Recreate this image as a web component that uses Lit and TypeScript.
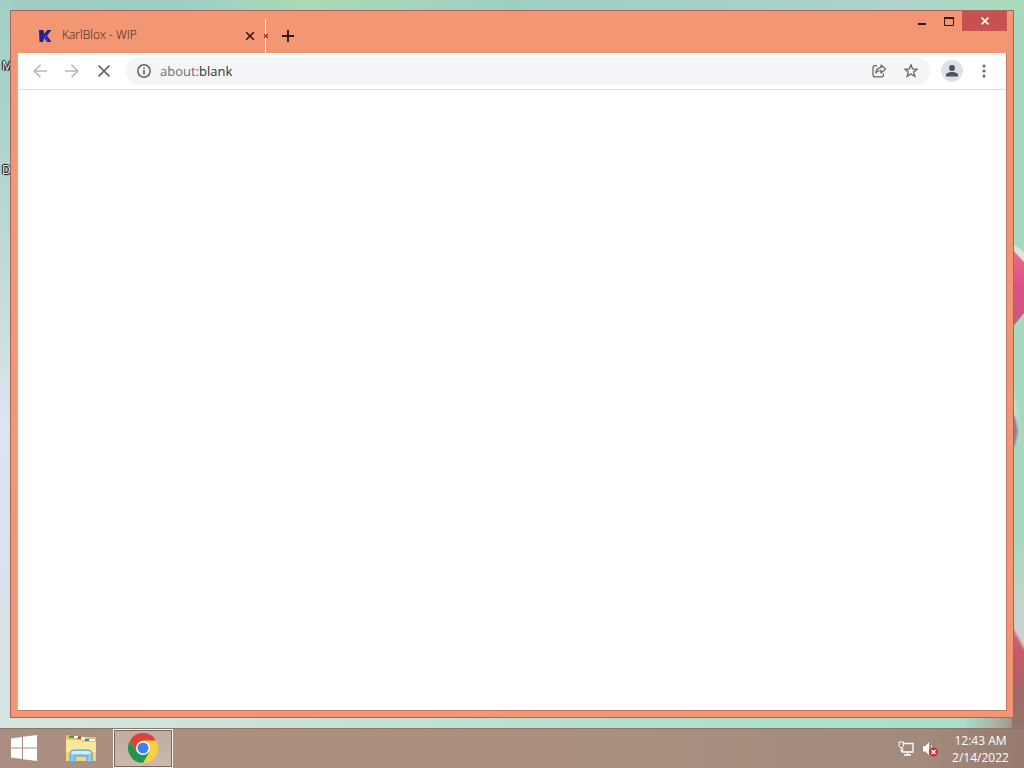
import { LitElement, html, css } from "lit";
import { customElement, state } from "lit/decorators.js";

@customElement("desktop-wallpaper")
class DesktopWallpaper extends LitElement {
  static styles = css`
    :host {
      display: block;
      position: absolute;
      inset: 0;
      overflow: hidden;
      background:
        linear-gradient(to bottom, #a0cfc4 0, #a9d2c8 12%, #c2dad6 35%, #dce4ee 55%, #d8e2e8 85%, #d3e6dc 100%) left / 12px 100% no-repeat,
        linear-gradient(to right, #9fcbc5 0, #9bcfc6 18%, #add9b6 30%, #9dcfc1 50%, #a9cfcb 75%, #b0d3cd 88%, #a9dbb9 100%) top / 100% 12px no-repeat,
        linear-gradient(to right, #d3e6dc 0, #c9e3da 30%, #b4dfcf 60%, #a9dfcb 94%, #a9a79b 98%, #93786e 100%) bottom / 100% 60px no-repeat,
        #a9d9bc;
    }
    .art {
      position: absolute;
      top: 0;
      right: 0;
      width: 12px;
      height: 100%;
    }
    .label {
      position: absolute;
      left: 2px;
      font: 12px/16px "Open Sans", "Noto Sans", sans-serif;
      color: #fff;
      text-shadow: 0 0 1px #000, 1px 1px 1px #000, -1px 0 1px #000, 0 -1px 1px #000;
    }
    .first { top: 58px; }
    .second { top: 162px; }
  `;
  render() {
    return html`
      <svg class="art" viewBox="0 0 12 768" preserveAspectRatio="none" aria-hidden="true">
        <defs>
          <linearGradient id="petal" x1="0" y1="0" x2="0" y2="1">
            <stop offset="0" stop-color="#e86f8c" /><stop offset=".5" stop-color="#dc4f89" /><stop offset="1" stop-color="#bf5f7c" />
          </linearGradient>
          <linearGradient id="haze" x1="0" y1="0" x2="0" y2="1">
            <stop offset="0" stop-color="#a9d9bc" /><stop offset=".4" stop-color="#bfd4ca" /><stop offset="1" stop-color="#d6cfd4" />
          </linearGradient>
          <linearGradient id="stem" x1="0" y1="0" x2="0" y2="1">
            <stop offset="0" stop-color="#d3758a" /><stop offset=".25" stop-color="#c9586c" /><stop offset=".6" stop-color="#a8656a" /><stop offset="1" stop-color="#8f766a" />
          </linearGradient>
          <filter id="soft" x="-50%" width="200%"><feGaussianBlur stdDeviation="1" /></filter>
        </defs>
        <path d="M0 243L12 252V266L0 250z" fill="#dbe5d8" />
        <path d="M0 249L12 262V313L0 328z" fill="url(#petal)" />
        <path d="M0 390Q8 405 7 440L0 448z" fill="#c3dcd0" filter="url(#soft)" />
        <path d="M0 412L4 420L6 432L3 446H0z" fill="#94799b" filter="url(#soft)" />
        <rect y="540" width="12" height="120" fill="url(#haze)" />
        <path d="M-4 624L2 630L16 656V728H-4z" fill="url(#stem)" filter="url(#soft)" />
      </svg>
      <span class="label first">M</span>
      <span class="label second">D</span>
    `;
  }
}

@customElement("browser-window")
class BrowserWindow extends LitElement {
  @state() private address = "about:blank";

  static styles = css`
    :host {
      display: flex;
      flex-direction: column;
      box-sizing: border-box;
      border: 1px solid #a5665a;
      background: #f39673;
      padding: 0 6px 6px;
      font-family: "Open Sans", "Noto Sans", sans-serif;
    }
    button {
      display: grid;
      place-items: center;
      border: 0;
      padding: 0;
      background: none;
      color: #5f6368;
    }
    svg { display: block; }
    .titlebar {
      display: flex;
      height: 42px;
      align-items: flex-start;
    }
    .tab {
      display: flex;
      align-items: center;
      box-sizing: border-box;
      width: 249px;
      height: 34px;
      margin-top: 8px;
      padding-left: 21px;
      border-right: 1px solid #fff3ec;
      color: #3a1a14;
      font-size: 12px;
      line-height: 16px;
    }
    .favicon { margin-right: 10px; }
    .title { flex: 1; padding-bottom: 2px; font-weight: 300; white-space: nowrap; }
    .close { width: 16px; height: 16px; margin-right: 7px; color: #35150f; }
    .sliver { width: 4px; height: 34px; margin: 8px 0 0 -2px; color: #6b3528; }
    .new { width: 28px; height: 34px; margin: 8px 0 0 6px; color: #35150f; }
    .controls { display: flex; margin-left: auto; }
    .controls button { width: 27px; height: 20px; color: #35150f; }
    .controls .exit { width: 45px; background: #c75050; color: #fff; }
    .page {
      flex: 1;
      display: flex;
      flex-direction: column;
      border: 1px solid #c9785f;
      border-top: 0;
      border-left-color: #eda48b;
      background: #fff;
    }
    .toolbar {
      display: flex;
      align-items: center;
      height: 36px;
      padding: 0 4px 0 6px;
      border-bottom: 1px solid #dadce0;
    }
    .nav { width: 32px; height: 32px; }
    .nav:disabled { color: #b4b7ba; }
    .omnibox {
      flex: 1;
      display: flex;
      align-items: center;
      height: 28px;
      margin: 0 8px 0 6px;
      padding: 0 3px 0 10px;
      border-radius: 14px;
      background: #f3f5f6;
    }
    .field { flex: 1; display: grid; margin-left: 8px; }
    input, .shown {
      grid-area: 1 / 1;
      border: 0;
      padding: 0;
      background: none;
      font: 13px/20px "Open Sans", "Noto Sans", sans-serif;
      outline: 0;
    }
    input { width: 100%; color: transparent; caret-color: #202124; }
    .shown { pointer-events: none; color: #303236; }
    .scheme { color: #6b6f74; }
    .info { width: 16px; height: 20px; }
    .action { width: 32px; height: 28px; }
    .avatar { width: 28px; height: 28px; }
    .more { width: 36px; height: 28px; }
    .content { flex: 1; }
  `;

  render() {
    return html`
      <header class="titlebar">
        <div class="tab">
          <svg class="favicon" width="14" height="14" viewBox="0 0 14 14" aria-hidden="true">
            <path d="M1 1H5.500L6 5L9.500 1H13.500L9 6.500L13.500 13H9L6 9L5 13H1.500z" fill="#26208c" />
            <path d="M5 8L8 6L11 12.500H9z" fill="#3a38bb" />
          </svg>
          <span class="title">KarlBlox - WIP</span>
          <button class="close" aria-label="Close tab">
            <svg width="10" height="10" viewBox="0 0 10 10"><path d="M1.200 1.200L8.800 8.800M8.800 1.200L1.200 8.800" stroke="currentColor" stroke-width="1.600" /></svg>
          </button>
        </div>
        <button class="sliver" aria-label="Close next tab">
          <svg width="4" height="6" viewBox="0 0 4 6"><path d="M0 1L4 5M4 1L0 5" stroke="currentColor" stroke-width="1.200" /></svg>
        </button>
        <button class="new" aria-label="New tab">
          <svg width="12" height="12" viewBox="0 0 12 12"><path d="M6 0V12M0 6H12" stroke="currentColor" stroke-width="1.800" /></svg>
        </button>
        <div class="controls">
          <button aria-label="Minimize"><svg width="8" height="10" viewBox="0 0 8 10"><path d="M0 7H8V9H0z" fill="currentColor" /></svg></button>
          <button aria-label="Maximize"><svg width="10" height="9" viewBox="0 0 10 9"><path d="M.5 1V8.500H9.500V1" fill="none" stroke="currentColor" /><path d="M0 0H10V2H0z" fill="currentColor" /></svg></button>
          <button class="exit" aria-label="Close"><svg width="8" height="8" viewBox="0 0 8 8"><path d="M.6.6L7.400 7.400M7.400.6L.6 7.400" stroke="currentColor" stroke-width="1.500" /></svg></button>
        </div>
      </header>
      <main class="page">
        <div class="toolbar">
          <button class="nav" disabled aria-label="Back"><svg width="14" height="14" viewBox="0 0 14 14"><path d="M14 7H1.500M7.500.7L1.200 7L7.500 13.300" fill="none" stroke="currentColor" stroke-width="1.600" /></svg></button>
          <button class="nav" disabled aria-label="Forward"><svg width="14" height="14" viewBox="0 0 14 14"><path d="M0 7H12.500M6.500.7L12.800 7L6.500 13.300" fill="none" stroke="currentColor" stroke-width="1.600" /></svg></button>
          <button class="nav" aria-label="Stop loading"><svg width="12" height="12" viewBox="0 0 12 12"><path d="M.6.6L11.400 11.400M11.400.6L.6 11.400" stroke="currentColor" stroke-width="1.600" /></svg></button>
          <div class="omnibox">
            <button class="info" aria-label="Page information">
              <svg width="14" height="14" viewBox="0 0 14 14"><circle cx="7" cy="7" r="6.200" fill="none" stroke="currentColor" stroke-width="1.500" /><path d="M6.200 6H7.800V10.500H6.200zM6.200 3.400H7.800V5H6.200z" fill="currentColor" /></svg>
            </button>
            <div class="field">
              <input id="address" aria-label="Address" .value=${this.address} @input=${(e: Event) => (this.address = (e.target as HTMLInputElement).value)} />
              <span class="shown" aria-hidden="true">${this.address.startsWith("about:") ? html`<span class="scheme">about:</span>${this.address.slice(6)}` : this.address}</span>
            </div>
            <button class="action" aria-label="Share">
              <svg width="16" height="16" viewBox="0 0 16 16" fill="none" stroke="currentColor" stroke-width="1.200"><path d="M6 2.600H4Q2 2.600 2 4.600V11.800Q2 13.800 4 13.800H10.500Q12.500 13.800 12.500 11.800V10.500" /><path d="M4.800 10Q5.200 5 10 4.600V2L14.600 6L10 10V7.500Q6.500 7.500 4.800 10z" stroke-linejoin="round" /></svg>
            </button>
            <button class="action" aria-label="Bookmark this page">
              <svg width="16" height="16" viewBox="0 0 16 16"><path d="M8 1.900L9.700 6L14 6.300L10.700 9.100L11.800 13.400L8 11L4.200 13.400L5.300 9.100L2 6.300L6.300 6z" fill="none" stroke="currentColor" stroke-width="1.300" /></svg>
            </button>
          </div>
          <button class="avatar" aria-label="Profile">
            <svg width="22" height="22" viewBox="0 0 22 22"><circle cx="11" cy="11" r="11" fill="#dee1e6" /><circle cx="11" cy="8" r="3" fill="#4d5160" /><path d="M5 16.500V15C5 12.800 9 12 11 12S17 12.800 17 15V16.500z" fill="#4d5160" /></svg>
          </button>
          <button class="more" aria-label="Menu">
            <svg width="4" height="14" viewBox="0 0 4 14" fill="currentColor"><circle cx="2" cy="2" r="1.500" /><circle cx="2" cy="7" r="1.500" /><circle cx="2" cy="12" r="1.500" /></svg>
          </button>
        </div>
        <div class="content"></div>
      </main>
    `;
  }
}

@customElement("task-bar")
class TaskBar extends LitElement {
  static styles = css`
    :host {
      display: flex;
      align-items: stretch;
      box-sizing: border-box;
      height: 40px;
      border-top: 1px solid #8d7468;
      background: linear-gradient(to right, #a98e81, #ad8f7e 25%, #aa907f 60%, #a28b7c 90%, #967b6e);
      font-family: "Open Sans", "Noto Sans", sans-serif;
    }
    button {
      display: grid;
      place-items: center;
      padding: 0;
      border: 0;
      background: none;
    }
    svg { display: block; }
    .start { width: 48px; }
    .app { width: 65px; }
    .active { width: 60px; border: 1px solid #fdf5ef; outline: 1px solid #7d675d; outline-offset: -2px; background: linear-gradient(to bottom, #c0aca1, #cbb9ae); }
    .tray { display: flex; align-items: center; margin-left: auto; padding-right: 5px; }
    .tray .icon { width: 24px; }
    .clock {
      width: 77px;
      font: 12px/17px "Open Sans", "Noto Sans", sans-serif;
      color: #fff;
      text-align: center;
      white-space: nowrap;
    }
    .clock span { display: block; }
  `;

  render() {
    return html`
      <button class="start" aria-label="Start">
        <svg width="28" height="28" viewBox="0 0 28 28" fill="#fff"><path d="M1 3.500L12 2V12.500H1zM13 1.800L27 0V12.500H13zM1 13.500H12V24L1 22.500zM13 13.500H27V26L13 24.200z" /></svg>
      </button>
      <button class="app" aria-label="File Explorer">
        <svg width="32" height="30" viewBox="0 0 32 30">
          <path d="M1 2.500Q1 1 2.500 1H9L11 3H30Q31 3 31 4V26H1z" fill="#e6c568" />
          <path d="M4 1.500H9V4H4z" fill="#3c9b45" /><path d="M12 2.500H16V5H12z" fill="#d8432e" />
          <path d="M9 2H13V4H9zM16 3H20V6H16zM24 5H30V7H24z" fill="#fff" />
          <path d="M20 5H24V7H20z" fill="#2f91ad" />
          <path d="M1 6H15L18 8H31V27H1z" fill="#f9e898" />
          <path d="M1 18H31V27H1z" fill="#efd779" />
          <path d="M5 28V20Q5 16 9 16H23Q27 16 27 20V28H22V22H10V28z" fill="#8dcaf0" stroke="#579fd4" />
          <path d="M6 19Q6 17 9 17H23Q26 17 26 19V20H6z" fill="#d2eeff" />
        </svg>
      </button>
      <button class="active" aria-label="Google Chrome">
        <svg width="32" height="32" viewBox="0 0 32 32">
          <circle cx="16" cy="15" r="15" fill="#fdd13b" />
          <path d="M16 15L9.500 18.750L3 7.500A15 15 0 0 0 16 30L22.500 18.750z" fill="#219653" />
          <path d="M3 7.500A15 15 0 0 1 29 7.500H16L9.500 18.750z" fill="#d84537" />
          <circle cx="16" cy="15" r="7" fill="#fff" />
          <circle cx="16" cy="15" r="5.500" fill="#3f82ea" />
        </svg>
      </button>
      <div class="tray">
        <button class="icon" aria-label="Network">
          <svg width="16" height="16" viewBox="0 0 16 16" fill="none" stroke="#fff"><path d="M6 2.500H15V11H4.500V7.500M9.500 11.500V13.500M6 14H13" stroke-width="1.300" /><path d="M1 1H5.500V5L4.500 6.500H2L1 5zM3 3H3.500M3.200 6.500V10.500H4.500" /></svg>
        </button>
        <button class="icon" aria-label="Volume muted">
          <svg width="18" height="18" viewBox="0 0 18 18"><path d="M2 6H4.500L8 2V15L4.500 11.500H2z" fill="#fff" /><path d="M10 5Q12 8 10 12" fill="none" stroke="#e4d8d2" /><circle cx="12.500" cy="12" r="4.500" fill="#d02c36" /><path d="M10.500 10L14.500 14M14.500 10L10.500 14" stroke="#fff" stroke-width="1.400" /></svg>
        </button>
        <div class="clock"><span>12:43 AM</span><span>2/14/2022</span></div>
      </div>
    `;
  }
}

@customElement("app-root")
class AppRoot extends LitElement {
  static styles = css`
    :host {
      display: flex;
      flex-direction: column;
      position: relative;
      height: 100vh;
      overflow: hidden;
    }
    .workspace {
      flex: 1;
      display: flex;
      position: relative;
      padding: 10px;
    }
    browser-window { flex: 1; min-width: 0; }
    task-bar { position: relative; }
  `;
  render() {
    return html`
      <desktop-wallpaper></desktop-wallpaper>
      <div class="workspace"><browser-window></browser-window></div>
      <task-bar></task-bar>
    `;
  }
}
